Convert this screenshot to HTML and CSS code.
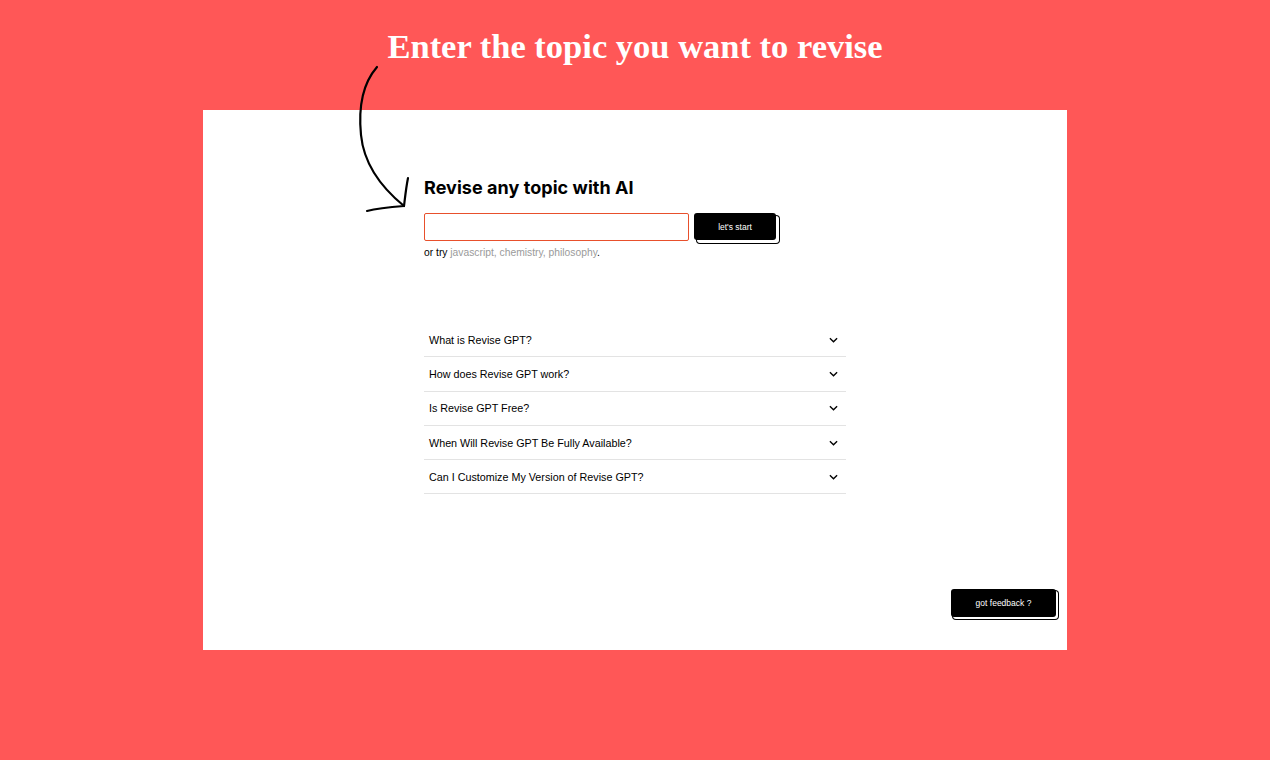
FILE: index.html
```html
<!DOCTYPE html>
<html lang="en">
<head>
<meta charset="utf-8">
<title>Revise GPT</title>
<link rel="stylesheet" href="styles.css">
</head>
<body>
<div class="stage">
  <h1 class="banner">Enter the topic you want to revise</h1>
  <svg class="arrow" width="60" height="160" viewBox="0 0 60 160" fill="none" stroke="#000" stroke-width="2.2" stroke-linecap="round" stroke-linejoin="round">
    <path d="M27 7 C 14 22, 8 45, 11 75 C 14 105, 32 128, 54 146"/>
    <path d="M58 118 C 56 128, 55 138, 54 146 C 40 147, 28 148, 17 151"/>
  </svg>
  <main class="panel">
    <section class="content">
      <h2 class="heading">Revise any topic with AI</h2>
      <div class="search">
        <input class="topic" type="text" aria-label="topic">
        <button class="btn start">let's start</button>
      </div>
      <p class="try">or try <span class="hint">javascript, chemistry, philosophy</span>.</p>
      <ul class="faq">
        <li><span>What is Revise GPT?</span><svg class="chev" viewBox="0 0 10 6" width="9" height="6"><path d="M1 1 L5 5 L9 1" fill="none" stroke="#000" stroke-width="1.5"/></svg></li>
        <li><span>How does Revise GPT work?</span><svg class="chev" viewBox="0 0 10 6" width="9" height="6"><path d="M1 1 L5 5 L9 1" fill="none" stroke="#000" stroke-width="1.5"/></svg></li>
        <li><span>Is Revise GPT Free?</span><svg class="chev" viewBox="0 0 10 6" width="9" height="6"><path d="M1 1 L5 5 L9 1" fill="none" stroke="#000" stroke-width="1.5"/></svg></li>
        <li><span>When Will Revise GPT Be Fully Available?</span><svg class="chev" viewBox="0 0 10 6" width="9" height="6"><path d="M1 1 L5 5 L9 1" fill="none" stroke="#000" stroke-width="1.5"/></svg></li>
        <li><span>Can I Customize My Version of Revise GPT?</span><svg class="chev" viewBox="0 0 10 6" width="9" height="6"><path d="M1 1 L5 5 L9 1" fill="none" stroke="#000" stroke-width="1.5"/></svg></li>
      </ul>
    </section>
    <button class="btn feedback">got feedback ?</button>
  </main>
</div>
</body>
</html>
```

FILE: styles.css
```css
* { box-sizing: border-box; }
html, body { margin: 0; padding: 0; }
body {
  background: #ff5757;
  width: 1270px;
  height: 760px;
  overflow: hidden;
  font-family: "Liberation Sans", Arial, sans-serif;
}
.stage {
  position: relative;
  display: flex;
  flex-direction: column;
  align-items: center;
  padding-top: 26px;
}
.banner {
  margin: 0;
  color: #fff;
  font-family: "Liberation Serif", "DejaVu Serif", serif;
  font-weight: bold;
  font-size: 34.5px;
  line-height: 40px;
  height: 40px;
}
.arrow {
  position: absolute;
  left: 350px;
  top: 60px;
  z-index: 2;
}
.panel {
  margin-top: 44px;
  width: 864px;
  height: 540px;
  background: #fff;
  position: relative;
  display: flex;
  justify-content: center;
}
.content {
  width: 422px;
  padding-top: 66px;
}
.heading {
  margin: 0;
  font-family: Inter, "Liberation Sans", sans-serif;
  font-weight: 700;
  font-size: 18px;
  line-height: 24px;
  letter-spacing: 0.05px;
  color: #000;
}
.search {
  display: flex;
  gap: 5px;
  margin-top: 13px;
}
.topic {
  width: 265px;
  height: 28px;
  border: 1px solid #e8502c;
  border-radius: 2px;
  outline: none;
  padding: 0 6px;
  margin: 0;
}
.btn {
  background: #000;
  color: #fff;
  border: none;
  border-radius: 3px;
  padding: 0;
  font-family: "Liberation Sans", Arial, sans-serif;
  font-size: 8.5px;
  cursor: pointer;
  box-shadow: 3px 3px 0 0 #fff, 3px 3px 0 1px #000;
}
.start {
  width: 82px;
  height: 27px;
}
.try {
  margin: 5px 0 0;
  font-size: 10.3px;
  line-height: 14px;
  color: #000;
}
.hint { color: #9a9a9a; }
.faq {
  list-style: none;
  margin: 63px 0 0;
  padding: 0;
}
.faq li {
  display: flex;
  justify-content: space-between;
  align-items: center;
  height: 34.3px;
  padding: 0 5px 0 5px;
  border-bottom: 1px solid #e3e3e3;
  font-size: 10.75px;
  color: #000;
}
.chev { margin-right: 3px; }
.feedback {
  position: absolute;
  right: 11px;
  bottom: 33px;
  width: 105px;
  height: 28px;
  box-shadow: 2px 2px 0 0 #fff, 2px 2px 0 1px #000;
}
```
